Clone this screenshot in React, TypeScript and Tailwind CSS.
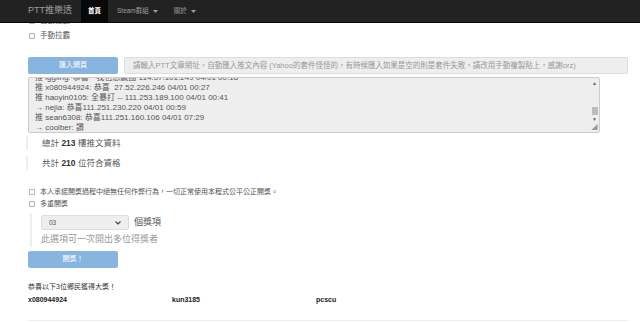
import React from "react";

const font = { fontFamily: '"Liberation Sans", "Noto Sans CJK TC", sans-serif' };

const pushLines = [
  "推 iggling: 恭喜 * 我也想贏團 114.37.101.249 04/01 00:18",
  "推 x080944924: 恭喜  27.52.226.246 04/01 00:27",
  "推 haoyin0105: 全暴打 -- 111.253.189.100 04/01 00:41",
  "→ nejia: 恭喜111.251.230.220 04/01 00:59",
  "推 sean6308: 恭喜111.251.160.106 04/01 07:29",
  "→ coolber: 讚",
];

const winners = ["x080944924", "kun3185", "pcscu"];

const Caret = () => (
  <svg width="5" height="3" viewBox="0 0 5 3" className="ml-[4px]">
    <path d="M0 0 L5 0 L2.5 3 Z" fill="#9d9d9d" />
  </svg>
);

const Check = ({ label, big }: { label: string; big?: boolean }) => (
  <label className={`flex items-center h-[12px] ${big ? "text-[7.5px]" : "text-[7px]"} text-[#555]`}>
    <span className="w-[6px] h-[6px] border border-[#bbb] bg-[#f4f4f4] ml-[1px] mr-[5px] shrink-0"></span>
    {label}
  </label>
);

export default function App() {
  return (
    <div style={font} className="w-[640px] h-[322px] overflow-hidden bg-white relative">
      {/* Navbar */}
      <nav className="fixed top-0 left-0 w-full h-[23px] bg-[#222] border-b border-[#080808] z-10 flex items-stretch pl-[28px]">
        <span className="text-[9px] text-[#9d9d9d] flex items-center mr-[9px]">PTT推樂透</span>
        <span className="bg-[#080808] text-white text-[6.5px] font-bold px-[7px] flex items-center">首頁</span>
        <span className="text-[#9d9d9d] text-[6.5px] px-[9px] flex items-center">
          Steam群組
          <Caret />
        </span>
        <span className="text-[#9d9d9d] text-[6.5px] px-[7px] flex items-center">
          關於
          <Caret />
        </span>
      </nav>

      <div className="px-[28px] pt-[15px] w-[600px] box-content">
        <Check big label="自動拉霸" />
        <div className="mt-[3px]">
          <Check big label="手動拉霸" />
        </div>

        {/* Import row */}
        <div className="flex gap-[6px] mt-[15px]">
          <button className="w-[90px] h-[17px] rounded-[2px] bg-[#88b5e0] text-white text-[7px] shrink-0">匯入網頁</button>
          <div className="flex-1 h-[17px] rounded-[2px] bg-[#eee] border border-[#ddd] text-[7.5px] text-[#999] flex items-center pl-[8px] whitespace-nowrap overflow-hidden">
            請輸入PTT文章網址，自動匯入推文內容 (Yahoo的套件怪怪的，有時候匯入如果是空的則是套件失敗，請改用手動複製貼上，感謝orz)
          </div>
        </div>

        {/* Textarea */}
        <div className="mt-[3px] h-[56px] w-[572px] bg-[#eee] border border-[#ccc] rounded-[2px] flex overflow-hidden">
          <div className="flex-1 pl-[6px] overflow-hidden">
            <div className="-mt-[5px] text-[8px] leading-[10px] text-[#555]">
              {pushLines.map((l) => (
                <div key={l} className="whitespace-pre">{l}</div>
              ))}
            </div>
          </div>
          <div className="w-[9px] flex flex-col items-center pt-[3px] pb-[1px]">
            <span className="text-[5px] leading-[5px] text-[#666]">▲</span>
            <span className="flex-1"></span>
            <span className="w-[6px] h-[8px] bg-[#bbb]"></span>
            <span className="text-[5px] leading-[5px] text-[#666] mt-[2px]">▼</span>
            <span className="text-[6px] leading-[8px] text-[#999] mt-[1px]">◢</span>
          </div>
        </div>

        {/* Totals */}
        <div className="mt-[3px] -ml-[2px] border-l-[2px] border-[#eee] pl-[14px] h-[14px] flex items-center text-[8.5px] text-[#555]">
          總計&nbsp;<b className="text-[#333]">213</b>&nbsp;樓推文資料
        </div>
        <div className="mt-[6px] -ml-[2px] border-l-[2px] border-[#eee] pl-[14px] h-[14px] flex items-center text-[8.5px] text-[#555]">
          共計&nbsp;<b className="text-[#333]">210</b>&nbsp;位符合資格
        </div>

        {/* Options */}
        <div className="mt-[16px]">
          <Check label="本人承諾開獎過程中絕無任何作弊行為，一切正常使用本程式公平公正開獎。" />
        </div>
        <Check label="多重開獎" />

        <div className="mt-[3px] ml-[2px] border-l-[2px] border-[#eee] pl-[9px] pt-[2px] pb-[1px]">
          <div className="flex items-center gap-[5px] h-[15px]">
            <div className="w-[88px] h-[15px] bg-[#eee] border border-[#ddd] rounded-[2px] flex items-center justify-between px-[7px] text-[6.5px] text-[#555]">
              <span>03</span>
              <svg width="6" height="4" viewBox="0 0 6 4">
                <path d="M0.5 0.5 L3 3 L5.5 0.5" fill="none" stroke="#444" strokeWidth="1.1" />
              </svg>
            </div>
            <span className="text-[9px] text-[#555] leading-[13px]">個獎項</span>
          </div>
          <div className="mt-[3px] text-[9px] text-[#999] leading-[13px]">此選項可一次開出多位得獎者</div>
        </div>

        <button className="mt-[4px] w-[90px] h-[17px] rounded-[2px] bg-[#88b5e0] text-white text-[7px] block">開獎！</button>

        {/* Winners */}
        <div className="mt-[14px] text-[7px] text-[#333] leading-[10px]">恭喜以下3位鄉民獲得大獎！</div>
        <div className="mt-[3px] grid grid-cols-[144px_144px_144px] text-[7px] font-bold text-[#222] leading-[10px]">
          {winners.map((w) => (
            <span key={w}>{w}</span>
          ))}
        </div>
        <div className="mt-[15px] border-t border-[#eee]"></div>
      </div>
    </div>
  );
}
